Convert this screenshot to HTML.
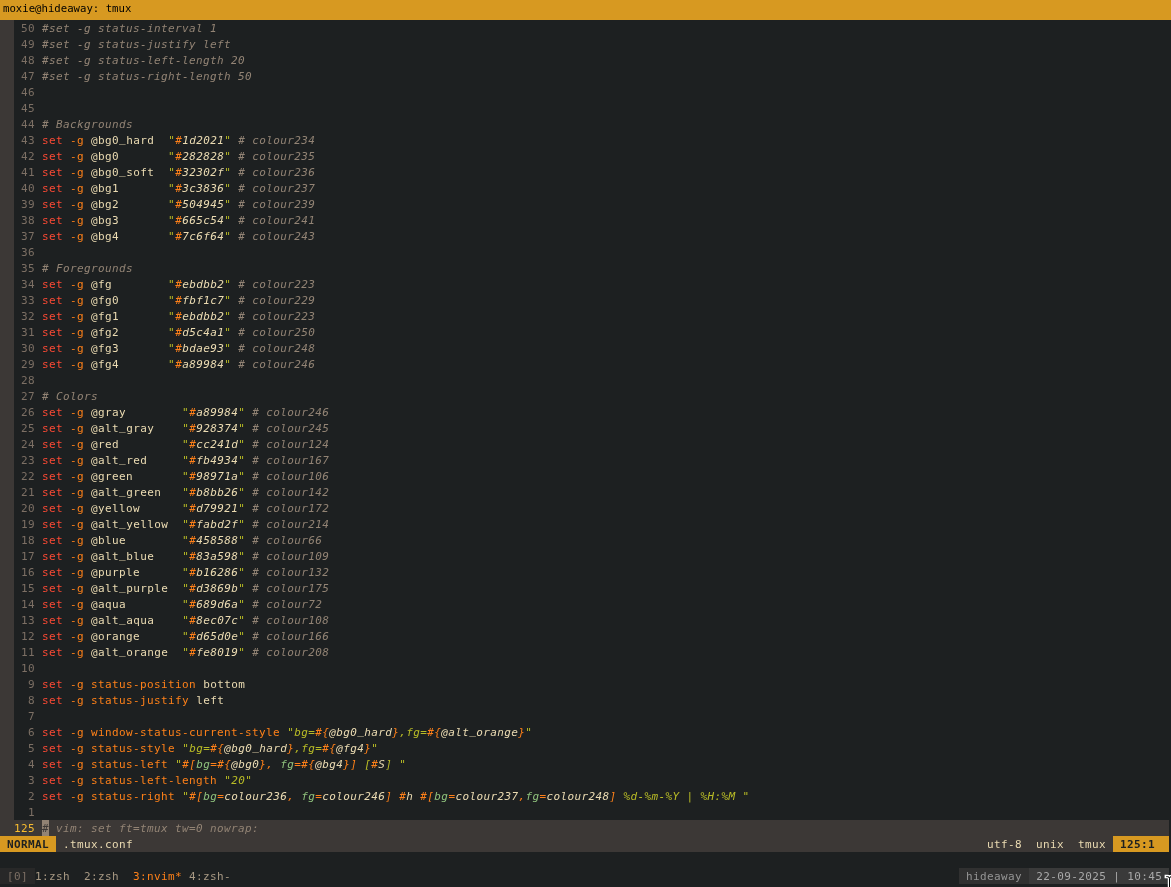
<!DOCTYPE html>
<html><head><meta charset="utf-8"><title>moxie@hideaway: tmux</title><style>
html,body{margin:0;padding:0;background:#1d2021;}
body{width:1171px;height:887px;overflow:hidden;position:relative;font-family:"DejaVu Sans Mono","Liberation Mono",monospace;}
#title{position:absolute;left:0;top:0;width:1171px;height:20px;background:#d79921;color:#000;font-size:10.67px;line-height:17px;white-space:pre;}
#title span{will-change:transform;position:absolute;left:2.7px;top:0;}
.row{will-change:transform;position:absolute;left:0;height:16px;line-height:18px;font-size:11px;letter-spacing:0.378px;white-space:pre;color:#ebdbb2;width:1169px;overflow:hidden;}
.row span{display:inline-block;height:16px;vertical-align:top;}
.sign{background:#3c3836;}
.ln{color:#7c6f64;}
.row .u{position:relative;top:-2px;}
.c{color:#928374;font-style:italic;}
.r{color:#fb4934;}
.o{color:#fe8019;}
.oi{color:#fe8019;font-style:italic;}
.f{color:#ebdbb2;}
.fi{color:#ebdbb2;font-style:italic;}
.s{color:#b8bb26;font-style:italic;}
.ai{color:#8ec07c;font-style:italic;}
.cl{background:#3c3836;}
.cln{color:#fabd2f;}
.cur{background:#928374;color:#3c3836;font-style:italic;}
.sl{background:#3c3836;}
.mode{background:#d79921;color:#1d2021;font-weight:bold;}
.slt{color:#ebdbb2;}
.tm{color:#a89984;}
.tl{background:#282828;color:#7c6f64;}
.tc{color:#fe8019;}
.th{background:#303030;color:#949494;}
.td{background:#3a3a3a;color:#a8a8a8;}
#ibeam{position:absolute;left:1160px;top:870px;}
</style></head>
<body>
<div id="title"><span>moxie@hideaway: tmux</span></div>
<div class="row" style="top:20px"><span class="sign">  </span><span class="ln"> 50 </span><span class="c">#set -g status-interval 1</span></div>
<div class="row" style="top:36px"><span class="sign">  </span><span class="ln"> 49 </span><span class="c">#set -g status-justify left</span></div>
<div class="row" style="top:52px"><span class="sign">  </span><span class="ln"> 48 </span><span class="c">#set -g status-left-length 20</span></div>
<div class="row" style="top:68px"><span class="sign">  </span><span class="ln"> 47 </span><span class="c">#set -g status-right-length 50</span></div>
<div class="row" style="top:84px"><span class="sign">  </span><span class="ln"> 46 </span></div>
<div class="row" style="top:100px"><span class="sign">  </span><span class="ln"> 45 </span></div>
<div class="row" style="top:116px"><span class="sign">  </span><span class="ln"> 44 </span><span class="c"># Backgrounds</span></div>
<div class="row" style="top:132px"><span class="sign">  </span><span class="ln"> 43 </span><span class="r">set</span> <span class="o">-g</span> <span class="f">@bg0<span class="u">_</span>hard  </span><span class="s">"</span><span class="oi">#</span><span class="fi">1d2021</span><span class="s">"</span> <span class="c"># colour234</span></div>
<div class="row" style="top:148px"><span class="sign">  </span><span class="ln"> 42 </span><span class="r">set</span> <span class="o">-g</span> <span class="f">@bg0       </span><span class="s">"</span><span class="oi">#</span><span class="fi">282828</span><span class="s">"</span> <span class="c"># colour235</span></div>
<div class="row" style="top:164px"><span class="sign">  </span><span class="ln"> 41 </span><span class="r">set</span> <span class="o">-g</span> <span class="f">@bg0<span class="u">_</span>soft  </span><span class="s">"</span><span class="oi">#</span><span class="fi">32302f</span><span class="s">"</span> <span class="c"># colour236</span></div>
<div class="row" style="top:180px"><span class="sign">  </span><span class="ln"> 40 </span><span class="r">set</span> <span class="o">-g</span> <span class="f">@bg1       </span><span class="s">"</span><span class="oi">#</span><span class="fi">3c3836</span><span class="s">"</span> <span class="c"># colour237</span></div>
<div class="row" style="top:196px"><span class="sign">  </span><span class="ln"> 39 </span><span class="r">set</span> <span class="o">-g</span> <span class="f">@bg2       </span><span class="s">"</span><span class="oi">#</span><span class="fi">504945</span><span class="s">"</span> <span class="c"># colour239</span></div>
<div class="row" style="top:212px"><span class="sign">  </span><span class="ln"> 38 </span><span class="r">set</span> <span class="o">-g</span> <span class="f">@bg3       </span><span class="s">"</span><span class="oi">#</span><span class="fi">665c54</span><span class="s">"</span> <span class="c"># colour241</span></div>
<div class="row" style="top:228px"><span class="sign">  </span><span class="ln"> 37 </span><span class="r">set</span> <span class="o">-g</span> <span class="f">@bg4       </span><span class="s">"</span><span class="oi">#</span><span class="fi">7c6f64</span><span class="s">"</span> <span class="c"># colour243</span></div>
<div class="row" style="top:244px"><span class="sign">  </span><span class="ln"> 36 </span></div>
<div class="row" style="top:260px"><span class="sign">  </span><span class="ln"> 35 </span><span class="c"># Foregrounds</span></div>
<div class="row" style="top:276px"><span class="sign">  </span><span class="ln"> 34 </span><span class="r">set</span> <span class="o">-g</span> <span class="f">@fg        </span><span class="s">"</span><span class="oi">#</span><span class="fi">ebdbb2</span><span class="s">"</span> <span class="c"># colour223</span></div>
<div class="row" style="top:292px"><span class="sign">  </span><span class="ln"> 33 </span><span class="r">set</span> <span class="o">-g</span> <span class="f">@fg0       </span><span class="s">"</span><span class="oi">#</span><span class="fi">fbf1c7</span><span class="s">"</span> <span class="c"># colour229</span></div>
<div class="row" style="top:308px"><span class="sign">  </span><span class="ln"> 32 </span><span class="r">set</span> <span class="o">-g</span> <span class="f">@fg1       </span><span class="s">"</span><span class="oi">#</span><span class="fi">ebdbb2</span><span class="s">"</span> <span class="c"># colour223</span></div>
<div class="row" style="top:324px"><span class="sign">  </span><span class="ln"> 31 </span><span class="r">set</span> <span class="o">-g</span> <span class="f">@fg2       </span><span class="s">"</span><span class="oi">#</span><span class="fi">d5c4a1</span><span class="s">"</span> <span class="c"># colour250</span></div>
<div class="row" style="top:340px"><span class="sign">  </span><span class="ln"> 30 </span><span class="r">set</span> <span class="o">-g</span> <span class="f">@fg3       </span><span class="s">"</span><span class="oi">#</span><span class="fi">bdae93</span><span class="s">"</span> <span class="c"># colour248</span></div>
<div class="row" style="top:356px"><span class="sign">  </span><span class="ln"> 29 </span><span class="r">set</span> <span class="o">-g</span> <span class="f">@fg4       </span><span class="s">"</span><span class="oi">#</span><span class="fi">a89984</span><span class="s">"</span> <span class="c"># colour246</span></div>
<div class="row" style="top:372px"><span class="sign">  </span><span class="ln"> 28 </span></div>
<div class="row" style="top:388px"><span class="sign">  </span><span class="ln"> 27 </span><span class="c"># Colors</span></div>
<div class="row" style="top:404px"><span class="sign">  </span><span class="ln"> 26 </span><span class="r">set</span> <span class="o">-g</span> <span class="f">@gray        </span><span class="s">"</span><span class="oi">#</span><span class="fi">a89984</span><span class="s">"</span> <span class="c"># colour246</span></div>
<div class="row" style="top:420px"><span class="sign">  </span><span class="ln"> 25 </span><span class="r">set</span> <span class="o">-g</span> <span class="f">@alt<span class="u">_</span>gray    </span><span class="s">"</span><span class="oi">#</span><span class="fi">928374</span><span class="s">"</span> <span class="c"># colour245</span></div>
<div class="row" style="top:436px"><span class="sign">  </span><span class="ln"> 24 </span><span class="r">set</span> <span class="o">-g</span> <span class="f">@red         </span><span class="s">"</span><span class="oi">#</span><span class="fi">cc241d</span><span class="s">"</span> <span class="c"># colour124</span></div>
<div class="row" style="top:452px"><span class="sign">  </span><span class="ln"> 23 </span><span class="r">set</span> <span class="o">-g</span> <span class="f">@alt<span class="u">_</span>red     </span><span class="s">"</span><span class="oi">#</span><span class="fi">fb4934</span><span class="s">"</span> <span class="c"># colour167</span></div>
<div class="row" style="top:468px"><span class="sign">  </span><span class="ln"> 22 </span><span class="r">set</span> <span class="o">-g</span> <span class="f">@green       </span><span class="s">"</span><span class="oi">#</span><span class="fi">98971a</span><span class="s">"</span> <span class="c"># colour106</span></div>
<div class="row" style="top:484px"><span class="sign">  </span><span class="ln"> 21 </span><span class="r">set</span> <span class="o">-g</span> <span class="f">@alt<span class="u">_</span>green   </span><span class="s">"</span><span class="oi">#</span><span class="fi">b8bb26</span><span class="s">"</span> <span class="c"># colour142</span></div>
<div class="row" style="top:500px"><span class="sign">  </span><span class="ln"> 20 </span><span class="r">set</span> <span class="o">-g</span> <span class="f">@yellow      </span><span class="s">"</span><span class="oi">#</span><span class="fi">d79921</span><span class="s">"</span> <span class="c"># colour172</span></div>
<div class="row" style="top:516px"><span class="sign">  </span><span class="ln"> 19 </span><span class="r">set</span> <span class="o">-g</span> <span class="f">@alt<span class="u">_</span>yellow  </span><span class="s">"</span><span class="oi">#</span><span class="fi">fabd2f</span><span class="s">"</span> <span class="c"># colour214</span></div>
<div class="row" style="top:532px"><span class="sign">  </span><span class="ln"> 18 </span><span class="r">set</span> <span class="o">-g</span> <span class="f">@blue        </span><span class="s">"</span><span class="oi">#</span><span class="fi">458588</span><span class="s">"</span> <span class="c"># colour66</span></div>
<div class="row" style="top:548px"><span class="sign">  </span><span class="ln"> 17 </span><span class="r">set</span> <span class="o">-g</span> <span class="f">@alt<span class="u">_</span>blue    </span><span class="s">"</span><span class="oi">#</span><span class="fi">83a598</span><span class="s">"</span> <span class="c"># colour109</span></div>
<div class="row" style="top:564px"><span class="sign">  </span><span class="ln"> 16 </span><span class="r">set</span> <span class="o">-g</span> <span class="f">@purple      </span><span class="s">"</span><span class="oi">#</span><span class="fi">b16286</span><span class="s">"</span> <span class="c"># colour132</span></div>
<div class="row" style="top:580px"><span class="sign">  </span><span class="ln"> 15 </span><span class="r">set</span> <span class="o">-g</span> <span class="f">@alt<span class="u">_</span>purple  </span><span class="s">"</span><span class="oi">#</span><span class="fi">d3869b</span><span class="s">"</span> <span class="c"># colour175</span></div>
<div class="row" style="top:596px"><span class="sign">  </span><span class="ln"> 14 </span><span class="r">set</span> <span class="o">-g</span> <span class="f">@aqua        </span><span class="s">"</span><span class="oi">#</span><span class="fi">689d6a</span><span class="s">"</span> <span class="c"># colour72</span></div>
<div class="row" style="top:612px"><span class="sign">  </span><span class="ln"> 13 </span><span class="r">set</span> <span class="o">-g</span> <span class="f">@alt<span class="u">_</span>aqua    </span><span class="s">"</span><span class="oi">#</span><span class="fi">8ec07c</span><span class="s">"</span> <span class="c"># colour108</span></div>
<div class="row" style="top:628px"><span class="sign">  </span><span class="ln"> 12 </span><span class="r">set</span> <span class="o">-g</span> <span class="f">@orange      </span><span class="s">"</span><span class="oi">#</span><span class="fi">d65d0e</span><span class="s">"</span> <span class="c"># colour166</span></div>
<div class="row" style="top:644px"><span class="sign">  </span><span class="ln"> 11 </span><span class="r">set</span> <span class="o">-g</span> <span class="f">@alt<span class="u">_</span>orange  </span><span class="s">"</span><span class="oi">#</span><span class="fi">fe8019</span><span class="s">"</span> <span class="c"># colour208</span></div>
<div class="row" style="top:660px"><span class="sign">  </span><span class="ln"> 10 </span></div>
<div class="row" style="top:676px"><span class="sign">  </span><span class="ln">  9 </span><span class="r">set</span> <span class="o">-g</span> <span class="o">status-position</span> <span class="f">bottom</span></div>
<div class="row" style="top:692px"><span class="sign">  </span><span class="ln">  8 </span><span class="r">set</span> <span class="o">-g</span> <span class="o">status-justify</span> <span class="f">left</span></div>
<div class="row" style="top:708px"><span class="sign">  </span><span class="ln">  7 </span></div>
<div class="row" style="top:724px"><span class="sign">  </span><span class="ln">  6 </span><span class="r">set</span> <span class="o">-g</span> <span class="o">window-status-current-style</span> <span class="s">"</span><span class="s">bg=</span><span class="oi">#{</span><span class="fi">@bg0<span class="u">_</span>hard</span><span class="oi">}</span><span class="s">,fg=</span><span class="oi">#{</span><span class="fi">@alt<span class="u">_</span>orange</span><span class="oi">}</span><span class="s">"</span></div>
<div class="row" style="top:740px"><span class="sign">  </span><span class="ln">  5 </span><span class="r">set</span> <span class="o">-g</span> <span class="o">status-style</span> <span class="s">"</span><span class="s">bg=</span><span class="oi">#{</span><span class="fi">@bg0<span class="u">_</span>hard</span><span class="oi">}</span><span class="s">,fg=</span><span class="oi">#{</span><span class="fi">@fg4</span><span class="oi">}</span><span class="s">"</span></div>
<div class="row" style="top:756px"><span class="sign">  </span><span class="ln">  4 </span><span class="r">set</span> <span class="o">-g</span> <span class="o">status-left</span> <span class="s">"</span><span class="oi">#[</span><span class="ai">bg</span><span class="oi">=#{</span><span class="fi">@bg0</span><span class="oi">},</span><span class="ai"> fg</span><span class="oi">=#{</span><span class="fi">@bg4</span><span class="oi">}]</span><span class="s"> [</span><span class="oi">#</span><span class="fi">S</span><span class="s">] </span><span class="s">"</span></div>
<div class="row" style="top:772px"><span class="sign">  </span><span class="ln">  3 </span><span class="r">set</span> <span class="o">-g</span> <span class="o">status-left-length</span> <span class="s">"</span><span class="s">20</span><span class="s">"</span></div>
<div class="row" style="top:788px"><span class="sign">  </span><span class="ln">  2 </span><span class="r">set</span> <span class="o">-g</span> <span class="o">status-right</span> <span class="s">"</span><span class="oi">#[</span><span class="ai">bg</span><span class="oi">=</span><span class="fi">colour236</span><span class="oi">,</span><span class="ai"> fg</span><span class="oi">=</span><span class="fi">colour246</span><span class="oi">]</span><span class="s"> </span><span class="oi">#</span><span class="fi">h</span><span class="s"> </span><span class="oi">#[</span><span class="ai">bg</span><span class="oi">=</span><span class="fi">colour237</span><span class="oi">,</span><span class="ai">fg</span><span class="oi">=</span><span class="fi">colour248</span><span class="oi">]</span><span class="s"> %d-%m-%Y | %H:%M </span><span class="s">"</span></div>
<div class="row" style="top:804px"><span class="sign">  </span><span class="ln">  1 </span></div>
<div class="row cl" style="top:820px"><span class="sign">  </span><span class="cln">125 </span><span class="cur">#</span><span class="c"> vim: set ft=tmux tw=0 nowrap:</span></div>
<div class="row sl" style="top:836px"><span class="mode"> NORMAL </span><span class="slt"> .tmux.conf                                                                                                                          utf-8  unix  tmux </span><span class="mode"> 125:1  </span></div>
<div class="row tm" style="top:868px"><span class="tl"> [0] </span>1:zsh  2:zsh  <span class="tc">3:nvim*</span> 4:zsh-                                                                                                        <span class="th"> hideaway </span><span class="td"> 22-09-2025 | 10:45 </span></div>
<svg id="ibeam" width="12" height="18" viewBox="0 0 12 18"><path d="M6.3 6.5 H7.3 Q9.5 6.5 9.5 8.6 V18 M13.5 6.5 H11.7 Q9.5 6.5 9.5 8.6" stroke="#fff" stroke-width="3.4" stroke-linecap="square" fill="none"/><path d="M6.3 6.6 H7.3 Q9.5 6.5 9.5 8.6 V18 M13.5 6.5 H11.7 Q9.5 6.5 9.5 8.6" stroke="#000" stroke-width="1" fill="none"/></svg>
</body></html>
